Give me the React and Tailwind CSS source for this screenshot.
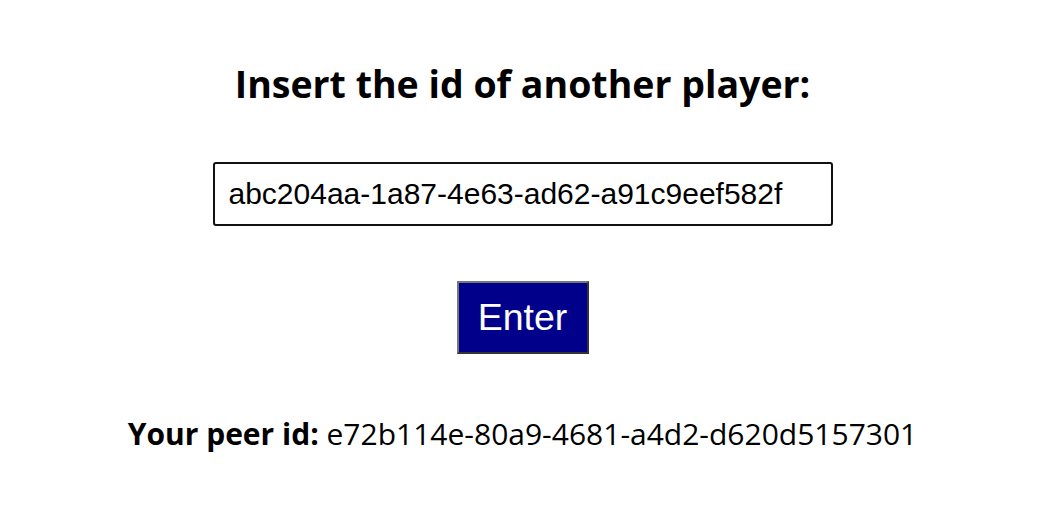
import { useState } from "react";

const App = () => {
  const [peerInput, setPeerInput] = useState("abc204aa-1a87-4e63-ad62-a91c9eef582f");
  const myId = "e72b114e-80a9-4681-a4d2-d620d5157301";

  return (
    <div className="min-h-[515px] bg-white flex flex-col items-center pl-[5px] font-['Open_Sans',sans-serif] text-black">
      <h1 className="mt-[60px] text-[37.5px] font-bold leading-[48px]">Insert the id of another player:</h1>
      <input
        className="mt-[54px] w-[620px] h-[64px] border-2 border-[#111] rounded-[3px] pl-[14px] font-['Liberation_Sans',Arial,sans-serif] text-[30px] outline-none"
        value={peerInput}
        onChange={(e) => setPeerInput(e.target.value)}
      />
      <button className="mt-[55px] w-[132px] h-[73px] bg-[#00008b] border-2 border-t-[#777] border-l-[#777] border-r-[#333] border-b-[#333] text-white font-['Liberation_Sans',Arial,sans-serif] text-[37.5px]">
        Enter
      </button>
      <p className="mt-[62px] text-[30px] leading-[36px]">
        <span className="font-bold">Your peer id:</span> {myId}
      </p>
    </div>
  );
};

export default App;
